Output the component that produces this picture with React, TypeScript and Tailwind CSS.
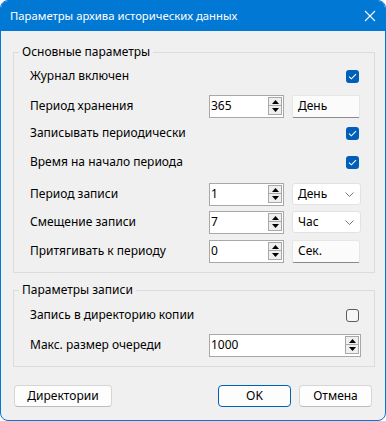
import React from "react";

const font = { fontFamily: '"Noto Sans", "DejaVu Sans", sans-serif' };

const Check: React.FC<{ checked?: boolean }> = ({ checked }) =>
  checked ? (
    <div className="w-[13px] h-[13px] rounded-[3px] bg-[#005fb8] flex items-center justify-center">
      <svg width="9" height="7" viewBox="0 0 9 7">
        <path d="M1 3.6 L3.4 5.8 L8 1.2" stroke="#fff" strokeWidth="1.1" fill="none" />
      </svg>
    </div>
  ) : (
    <div className="w-[13px] h-[13px] rounded-[3px] border border-[#5c5c5c] bg-[#f6f6f6]" />
  );

const SpinBox: React.FC<{ value: string; className?: string }> = ({ value, className }) => (
  <div
    className={`h-[23px] flex items-center border border-[#a8a8a8] bg-white pl-[1px] pr-[1px] ${className || ""}`}
  >
    <div className="flex-1 text-[12px] leading-none text-black">{value}</div>
    <div className="flex flex-col gap-0">
      <div className="w-[14px] h-[9px] border border-[#a8a8a8] bg-[#efefef] flex items-center justify-center">
        <svg width="7" height="4" viewBox="0 0 7 4">
          <path d="M0 4 L3.5 0 L7 4 Z" fill="#000" />
        </svg>
      </div>
      <div className="w-[14px] h-[9px] border border-[#a8a8a8] border-t-0 bg-[#efefef] flex items-center justify-center">
        <svg width="7" height="4" viewBox="0 0 7 4">
          <path d="M0 0 L3.5 4 L7 0 Z" fill="#000" />
        </svg>
      </div>
    </div>
  </div>
);

const FlatButton: React.FC<{ label: string }> = ({ label }) => (
  <div className="w-[68px] h-[23px] flex items-center pl-[5px] text-[12px] bg-[#fbfbfb] border border-[#e6e6e6] border-b-[#8a8a8a] rounded-[2px]">
    {label}
  </div>
);

const Combo: React.FC<{ label: string }> = ({ label }) => (
  <div className="w-[69px] h-[22px] flex items-center justify-between pl-[5px] pr-[6px] text-[12px] bg-white border border-[#e2e2e2] rounded-[3px]">
    <span>{label}</span>
    <svg width="9" height="5" viewBox="0 0 9 5">
      <path d="M0.5 0.5 L4.5 4.5 L8.5 0.5" stroke="#666" strokeWidth="0.9" fill="none" />
    </svg>
  </div>
);

const Row: React.FC<{ label: string; className?: string; children?: React.ReactNode }> = ({
  label,
  className,
  children,
}) => (
  <div className={`h-[24px] flex items-center ${className || ""}`}>
    <div className="w-[179px] text-[12px] text-black">{label}</div>
    <div className="flex-1 flex items-center gap-[8px]">{children}</div>
  </div>
);

const CheckRow: React.FC<{ label: string; checked?: boolean; className?: string }> = ({
  label,
  checked,
  className,
}) => (
  <div className={`h-[24px] flex items-center justify-between ${className || ""}`}>
    <div className="text-[12px] text-black">{label}</div>
    <div className="mr-[2px]">
      <Check checked={checked} />
    </div>
  </div>
);

const DlgButton: React.FC<{ label: string; width: string; primary?: boolean }> = ({
  label,
  width,
  primary,
}) => (
  <div
    className={`${width} h-[22px] flex items-center justify-center text-[12px] text-black bg-[#fdfdfd] rounded-[4px] border ${
      primary ? "border-[#005fb8]" : "border-[#d6d6d6] border-b-[#bcbcbc]"
    }`}
  >
    {label}
  </div>
);

export default function App() {
  return (
    <div style={font} className="w-[386px] h-[421px] bg-white">
      <div className="w-[386px] h-[421px] rounded-[8px] overflow-hidden border border-[#0078d4] bg-[#f0f0f0] flex flex-col">
        <div className="h-[30px] bg-[#0078d4] flex items-center justify-between pl-[9px] pr-[9px] shrink-0">
          <span className="text-[11.3px] text-white">Параметры архива исторических данных</span>
          <svg width="12" height="12" viewBox="0 0 12 12">
            <path d="M1 1 L11 11 M11 1 L1 11" stroke="#fff" strokeWidth="1.1" />
          </svg>
        </div>

        <div className="px-[12px] pt-[13px] flex flex-col">
          <fieldset className="border border-[#dcdcdc] pb-[9px]">
            <legend className="ml-[5px] px-[3px] text-[12px] leading-[16px] text-black">
              Основные параметры
            </legend>
            <div className="pl-[16px] pr-[13px]">
              <CheckRow label="Журнал включен" checked className="mt-[4px]" />
              <Row label="Период хранения" className="mt-[6px]">
                <SpinBox value="365" className="w-[75px]" />
                <FlatButton label="День" />
              </Row>
              <CheckRow label="Записывать периодически" checked className="mt-[3px]" />
              <CheckRow label="Время на начало периода" checked className="mt-[5px]" />
              <Row label="Период записи" className="mt-[8px]">
                <SpinBox value="1" className="w-[75px]" />
                <Combo label="День" />
              </Row>
              <Row label="Смещение записи" className="mt-[4px]">
                <SpinBox value="7" className="w-[75px]" />
                <Combo label="Час" />
              </Row>
              <Row label="Притягивать к периоду" className="mt-[5px]">
                <SpinBox value="0" className="w-[75px]" />
                <FlatButton label="Сек." />
              </Row>
            </div>
          </fieldset>

          <fieldset className="mt-[9px] border border-[#dcdcdc] pb-[9px]">
            <legend className="ml-[5px] px-[3px] text-[12px] leading-[16px] text-black">
              Параметры записи
            </legend>
            <div className="pl-[16px] pr-[13px]">
              <CheckRow label="Запись в директорию копии" className="mt-[5px]" />
              <Row label="Макс. размер очереди" className="mt-[6px]">
                <SpinBox value="1000" className="w-[152px]" />
              </Row>
            </div>
          </fieldset>

          <div className="mt-[18px] flex items-center">
            <div className="ml-[1px]">
              <DlgButton label="Директории" width="w-[98px]" />
            </div>
            <div className="ml-auto flex gap-[8px] mr-[1px]">
              <DlgButton label="OK" width="w-[73px]" primary />
              <DlgButton label="Отмена" width="w-[73px]" />
            </div>
          </div>
        </div>
      </div>
    </div>
  );
}
